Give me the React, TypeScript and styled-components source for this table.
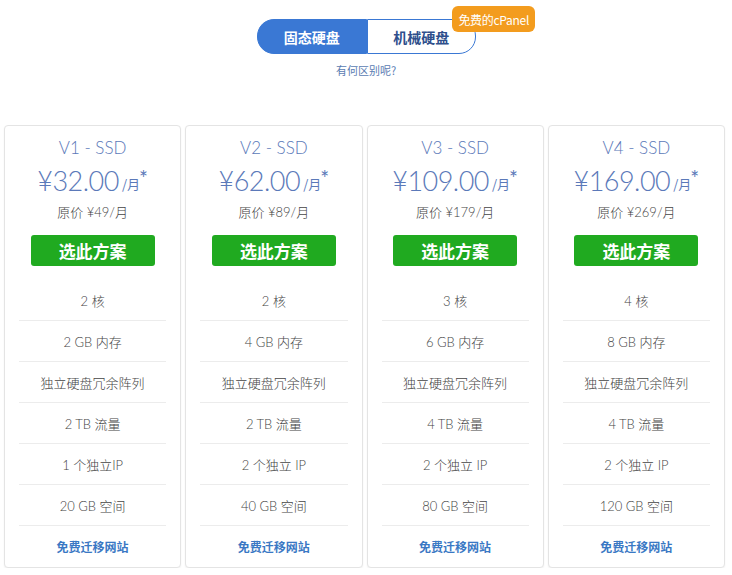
import React from "react";
import styled, { createGlobalStyle } from "styled-components";

const Global = createGlobalStyle`
  html, body { margin: 0; padding: 0; background: #fff; }
  body { font-family: "Lato", "Noto Sans CJK SC", sans-serif; color: #555; }
`;

const Page = styled.div`
  width: 732px;
  display: flex;
  flex-direction: column;
  align-items: center;
`;

const Header = styled.div`
  padding-top: 19px;
  display: flex;
  flex-direction: column;
  align-items: center;
`;

const Toggle = styled.div`
  position: relative;
  display: flex;
  width: 219px;
  height: 35px;
  margin-left: 1px;
`;

const ToggleBtn = styled.div<{ $active?: boolean }>`
  flex: 1;
  display: flex;
  align-items: center;
  justify-content: center;
  font-family: "Noto Sans CJK SC", sans-serif;
  font-weight: 700;
  font-size: 14px;
  box-sizing: border-box;
  color: ${(p) => (p.$active ? "#fff" : "#2e4f8c")};
  background: ${(p) => (p.$active ? "#3a78d4" : "#fff")};
  border: 1px solid #3a78d4;
  border-radius: ${(p) => (p.$active ? "17px 0 0 17px" : "0 17px 17px 0")};
`;

const Badge = styled.div`
  position: absolute;
  top: -13px;
  right: -59px;
  height: 26px;
  padding: 0 6px;
  display: flex;
  align-items: center;
  background: #f39c1e;
  color: #fff;
  font-family: "Noto Sans CJK SC", sans-serif;
  font-size: 12px;
  border-radius: 6px;
  letter-spacing: -0.3px;
`;

const DiffLink = styled.div`
  margin-top: 8px;
  font-family: "Noto Sans CJK SC", sans-serif;
  font-size: 11px;
  color: #5a7cb2;
  line-height: 16px;
`;

const Grid = styled.div`
  margin-top: 47px;
  align-self: flex-start;
  margin-left: 4px;
  width: 721px;
  display: grid;
  grid-template-columns: repeat(4, 1fr);
  gap: 4px;
`;

const Card = styled.div`
  background: #fff;
  border: 1px solid #e4e4e4;
  border-radius: 4px;
  box-shadow: 0 1px 2px rgba(0, 0, 0, 0.06);
  padding: 10px 14px 0;
  display: flex;
  flex-direction: column;
  align-items: center;
`;

const Title = styled.div`
  font-size: 17px;
  line-height: 24px;
  color: #5b79b9;
  font-weight: 300;
`;

const Price = styled.div`
  margin-top: 4px;
  height: 34px;
  display: flex;
  align-items: flex-end;
  color: #5b79b9;
`;

const Amount = styled.span`
  font-size: 27px;
  font-weight: 300;
  line-height: 34px;
  letter-spacing: -0.5px;
`;

const Per = styled.span`
  font-family: "Noto Sans CJK SC", sans-serif;
  font-size: 13px;
  line-height: 28px;
  margin-left: 3px;
`;

const Star = styled.span`
  font-size: 21px;
  align-self: flex-start;
  line-height: 20px;
  margin-top: 4px;
  margin-left: -1px;
`;

const Original = styled.div`
  margin-top: 5px;
  font-family: "Lato", "Noto Sans CJK SC", sans-serif;
  font-size: 13px;
  font-weight: 300;
  line-height: 18px;
  color: #444;
`;

const Choose = styled.button`
  margin-top: 14px;
  width: 124px;
  height: 31px;
  border: none;
  border-radius: 3px;
  background: #20aa20;
  color: #fff;
  font-family: "Noto Sans CJK SC", sans-serif;
  font-size: 17px;
  font-weight: 700;
  cursor: pointer;
`;

const Features = styled.div`
  margin-top: 14px;
  align-self: stretch;
  display: flex;
  flex-direction: column;
`;

const Feature = styled.div<{ $link?: boolean }>`
  height: 41px;
  box-sizing: border-box;
  display: flex;
  align-items: center;
  justify-content: center;
  border-bottom: ${(p) => (p.$link ? "none" : "1px solid #ececec")};
  font-family: ${(p) =>
    p.$link ? `"Noto Sans CJK SC", sans-serif` : `"Lato", "Noto Sans CJK SC", sans-serif`};
  font-size: ${(p) => (p.$link ? "12px" : "13px")};
  font-weight: ${(p) => (p.$link ? 700 : 300)};
  color: ${(p) => (p.$link ? "#3a78c4" : "#444")};
`;

const plans = [
  { name: "V1 - SSD", price: "¥32.00", orig: "¥49/月", cores: "2 核", ram: "2 GB 内存", bw: "2 TB 流量", ip: "1 个独立IP", disk: "20 GB 空间" },
  { name: "V2 - SSD", price: "¥62.00", orig: "¥89/月", cores: "2 核", ram: "4 GB 内存", bw: "2 TB 流量", ip: "2 个独立 IP", disk: "40 GB 空间" },
  { name: "V3 - SSD", price: "¥109.00", orig: "¥179/月", cores: "3 核", ram: "6 GB 内存", bw: "4 TB 流量", ip: "2 个独立 IP", disk: "80 GB 空间" },
  { name: "V4 - SSD", price: "¥169.00", orig: "¥269/月", cores: "4 核", ram: "8 GB 内存", bw: "4 TB 流量", ip: "2 个独立 IP", disk: "120 GB 空间" },
];

export default function App() {
  return (
    <Page>
      <Global />
      <Header>
        <Toggle>
          <ToggleBtn $active>固态硬盘</ToggleBtn>
          <ToggleBtn>机械硬盘</ToggleBtn>
          <Badge>免费的cPanel</Badge>
        </Toggle>
        <DiffLink>有何区别呢?</DiffLink>
      </Header>
      <Grid>
        {plans.map((p) => (
          <Card key={p.name}>
            <Title>{p.name}</Title>
            <Price>
              <Amount>{p.price}</Amount>
              <Per>/月</Per>
              <Star>*</Star>
            </Price>
            <Original>原价 {p.orig}</Original>
            <Choose>选此方案</Choose>
            <Features>
              <Feature>{p.cores}</Feature>
              <Feature>{p.ram}</Feature>
              <Feature>独立硬盘冗余阵列</Feature>
              <Feature>{p.bw}</Feature>
              <Feature>{p.ip}</Feature>
              <Feature>{p.disk}</Feature>
              <Feature $link>免费迁移网站</Feature>
            </Features>
          </Card>
        ))}
      </Grid>
    </Page>
  );
}
